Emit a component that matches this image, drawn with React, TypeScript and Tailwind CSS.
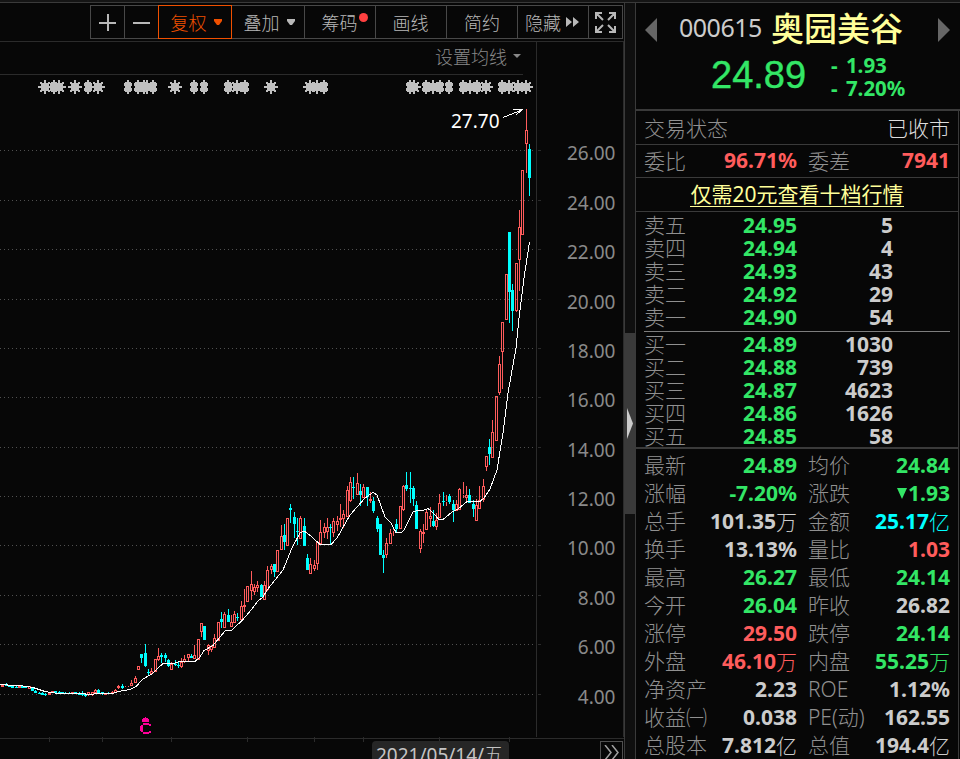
import React from 'react'

type Candle = [x: number, high: number, top: number, bottom: number, low: number, up: 0 | 1]

interface QuoteCell {
    label: string
    value: string
    unit?: string
    color: string
    arrow?: boolean
}

const GREEN = 'text-[#33e666]'
const RED = 'text-[#ff5c5c]'
const WHITE = 'text-[#cccccc]'
const CYAN = 'text-[#00ffff]'

const SANS = "font-['Noto_Sans','Noto_Sans_CJK_SC',sans-serif]"
const CJK = "font-['Noto_Sans_CJK_SC',sans-serif] font-light"

// x, high, body top, body bottom, low, rising
const candles: Candle[] = [
    [2, 684, 685, 686, 686, 1], [6, 683, 684, 685, 685, 0], [9, 685, 685, 686, 686, 0],
    [12, 685, 686, 687, 687, 0], [16, 686, 687, 687, 687, 0], [19, 685, 686, 687, 687, 1],
    [22, 686, 686, 687, 687, 0], [25, 686, 687, 687, 687, 0], [29, 686, 686, 688, 688, 1],
    [32, 687, 688, 690, 690, 0], [35, 690, 691, 692, 692, 0], [39, 692, 693, 693, 693, 0],
    [42, 692, 693, 694, 694, 0], [45, 693, 694, 694, 695, 0], [49, 692, 693, 694, 694, 1],
    [52, 691, 691, 692, 692, 1], [55, 691, 691, 692, 692, 0], [59, 691, 692, 693, 693, 0],
    [62, 692, 692, 693, 693, 0], [65, 692, 693, 693, 693, 0], [69, 692, 693, 693, 693, 0],
    [72, 692, 692, 693, 693, 1], [75, 692, 692, 693, 693, 0], [79, 692, 693, 694, 694, 0],
    [82, 691, 693, 694, 695, 0], [85, 694, 694, 695, 696, 0], [88, 692, 692, 694, 695, 1],
    [92, 692, 692, 694, 695, 1], [95, 689, 690, 692, 693, 1], [98, 689, 690, 692, 693, 0],
    [102, 692, 692, 693, 694, 0], [105, 693, 693, 694, 694, 1], [108, 692, 693, 693, 693, 0],
    [112, 691, 692, 693, 693, 1], [115, 689, 690, 692, 692, 1], [118, 685, 686, 687, 688, 1],
    [122, 684, 686, 687, 688, 0], [125, 686, 687, 687, 687, 1], [128, 686, 687, 687, 687, 1],
    [131, 680, 683, 685, 685, 1], [135, 676, 678, 682, 682, 1], [138, 666, 666, 669, 669, 1],
    [141, 654, 654, 657, 662, 0], [145, 644, 653, 665, 666, 0], [148, 669, 672, 672, 675, 0],
    [151, 668, 671, 673, 673, 1], [155, 659, 659, 671, 671, 1], [158, 648, 656, 659, 660, 1],
    [161, 653, 655, 656, 662, 0], [165, 653, 655, 657, 661, 0], [168, 659, 660, 665, 666, 0],
    [171, 662, 664, 669, 669, 1], [175, 660, 664, 664, 665, 0], [178, 661, 665, 665, 667, 0],
    [181, 658, 662, 666, 667, 1], [184, 655, 659, 661, 662, 1], [188, 654, 654, 657, 660, 1],
    [191, 654, 656, 657, 657, 0], [194, 645, 655, 658, 658, 1], [198, 639, 639, 659, 659, 1],
    [201, 623, 623, 631, 636, 1], [204, 626, 626, 639, 639, 0], [208, 644, 645, 650, 654, 1],
    [211, 645, 646, 649, 651, 1], [214, 634, 638, 647, 647, 1], [218, 622, 622, 640, 640, 1],
    [221, 612, 619, 621, 627, 0], [224, 612, 614, 627, 627, 1], [228, 609, 615, 621, 621, 0],
    [231, 615, 622, 626, 626, 1], [234, 611, 614, 622, 622, 1], [237, 613, 617, 617, 620, 0],
    [241, 601, 606, 619, 619, 1], [244, 589, 605, 606, 611, 1], [247, 586, 586, 601, 601, 1],
    [251, 571, 584, 590, 599, 1], [254, 584, 587, 591, 594, 1], [257, 581, 585, 587, 591, 1],
    [261, 584, 585, 596, 596, 0], [264, 581, 585, 599, 599, 1], [267, 566, 570, 589, 590, 1],
    [271, 564, 566, 569, 573, 1], [274, 564, 564, 571, 576, 0], [277, 550, 550, 571, 571, 1],
    [281, 525, 536, 549, 549, 1], [284, 524, 535, 541, 549, 0], [287, 518, 518, 545, 545, 1],
    [290, 504, 508, 509, 522, 0], [294, 512, 517, 523, 537, 0], [297, 518, 531, 531, 544, 0],
    [300, 516, 518, 538, 538, 1], [304, 518, 526, 545, 545, 0], [307, 554, 558, 569, 569, 0],
    [310, 558, 564, 573, 573, 1], [314, 560, 565, 568, 570, 1], [317, 541, 542, 563, 569, 1],
    [320, 520, 532, 543, 543, 1], [324, 523, 527, 532, 537, 1], [327, 518, 527, 531, 538, 1],
    [330, 524, 527, 527, 544, 0], [333, 518, 521, 532, 536, 1], [337, 516, 521, 524, 530, 1],
    [340, 504, 518, 519, 526, 1], [343, 510, 514, 518, 527, 1], [347, 486, 490, 516, 516, 1],
    [350, 477, 482, 500, 501, 1], [353, 477, 487, 487, 498, 0], [357, 473, 483, 494, 494, 1],
    [360, 484, 491, 494, 505, 0], [363, 484, 487, 497, 497, 1], [367, 487, 487, 496, 505, 0],
    [370, 492, 499, 500, 502, 1], [373, 497, 501, 510, 512, 0], [377, 516, 518, 528, 531, 0],
    [380, 524, 524, 554, 554, 0], [383, 550, 555, 557, 572, 0], [386, 538, 543, 554, 557, 1],
    [390, 529, 533, 543, 543, 1], [393, 529, 530, 530, 535, 1], [396, 519, 524, 528, 532, 0],
    [400, 506, 506, 528, 528, 1], [403, 485, 486, 509, 510, 1], [406, 472, 485, 488, 490, 0],
    [410, 472, 488, 488, 502, 0], [413, 486, 488, 498, 505, 0], [416, 501, 505, 528, 528, 0],
    [420, 529, 531, 548, 552, 1], [423, 524, 532, 533, 542, 1], [426, 510, 512, 529, 529, 1],
    [430, 507, 516, 518, 526, 1], [433, 510, 521, 525, 526, 0], [436, 513, 520, 526, 529, 1],
    [439, 494, 503, 517, 517, 1], [443, 492, 501, 501, 505, 0], [446, 495, 501, 501, 505, 1],
    [449, 494, 496, 501, 503, 0], [453, 500, 504, 509, 521, 0], [456, 500, 504, 510, 510, 1],
    [459, 488, 489, 509, 509, 1], [463, 482, 494, 494, 497, 1], [466, 486, 495, 497, 502, 1],
    [469, 489, 495, 502, 502, 0], [473, 500, 504, 508, 516, 0], [476, 499, 505, 520, 520, 1],
    [479, 486, 500, 508, 508, 1], [483, 479, 486, 499, 501, 1], [486, 456, 456, 466, 470, 1],
    [489, 439, 447, 453, 464, 0], [492, 420, 432, 457, 457, 1], [496, 396, 396, 440, 440, 1],
    [499, 356, 364, 392, 394, 1], [502, 322, 322, 351, 388, 1], [506, 274, 274, 319, 319, 1],
    [509, 232, 232, 291, 322, 0], [512, 284, 290, 310, 330, 0], [516, 263, 263, 310, 311, 1],
    [519, 210, 227, 259, 290, 1], [522, 170, 170, 234, 234, 1], [526, 109, 130, 143, 172, 1],
    [529, 144, 149, 177, 195, 0],
]

const average =
    '0,684.5 7,684.5 8,685.5 20,685.5 33,687.5 45,691.5 58,693.5 83,693.5 88,694.5 100,693.5 113,693.5 118,691.5 130,689.5 136,686.5 143,679 152,674 157,669 163,663.5 173,663.5 180,661.5 195,661.5 200,657 204,650.5 213,645.5 225,631 232,630 242,620.5 252,609 258,601 263,597 267,590 283,570 292,548 300,533 303,531.5 305,531.5 312,537 320,544.5 331,544.5 337,538 350,515 365,498 373,492.5 377,495 385,517 391,523 396,532.5 401,533 404,530 413,512 417,510.5 423,510.5 428,508.5 432,512 439,519.5 443,519.5 452,512 458,509 467,501.5 480,501.5 484,498 490,489 497,470 503,433 508,393 516,348 519,318 524,278 529.5,242'

const prices = [
    ['26.00', 150], ['24.00', 200], ['22.00', 249], ['20.00', 299], ['18.00', 348], ['16.00', 397],
    ['14.00', 447], ['12.00', 496], ['10.00', 545], ['8.00', 595], ['6.00', 644], ['4.00', 694],
] as const

const timeTicks = [49, 102, 171, 247, 314, 363, 439, 509]

// event markers above the chart: full stars and the narrow ones that are cut at the sides
const wideMarks = [45, 59, 75, 98, 147, 175, 237, 271, 310, 317, 414, 433, 470, 486, 509, 518, 526]
const narrowMarks = [54, 88, 128, 138, 144, 153, 194, 204, 228, 245, 324, 410, 426, 440, 449, 463, 477, 502]

const asks = [
    ['卖五', '24.95', '5'],
    ['卖四', '24.94', '4'],
    ['卖三', '24.93', '43'],
    ['卖二', '24.92', '29'],
    ['卖一', '24.90', '54'],
]

const bids = [
    ['买一', '24.89', '1030'],
    ['买二', '24.88', '739'],
    ['买三', '24.87', '4623'],
    ['买四', '24.86', '1626'],
    ['买五', '24.85', '58'],
]

const quotes: [QuoteCell, QuoteCell][] = [
    [{ label: '最新', value: '24.89', color: GREEN }, { label: '均价', value: '24.84', color: GREEN }],
    [{ label: '涨幅', value: '-7.20%', color: GREEN }, { label: '涨跌', value: '1.93', color: GREEN, arrow: true }],
    [{ label: '总手', value: '101.35', unit: '万', color: WHITE }, { label: '金额', value: '25.17', unit: '亿', color: CYAN }],
    [{ label: '换手', value: '13.13%', color: WHITE }, { label: '量比', value: '1.03', color: RED }],
    [{ label: '最高', value: '26.27', color: GREEN }, { label: '最低', value: '24.14', color: GREEN }],
    [{ label: '今开', value: '26.04', color: GREEN }, { label: '昨收', value: '26.82', color: WHITE }],
    [{ label: '涨停', value: '29.50', color: RED }, { label: '跌停', value: '24.14', color: GREEN }],
    [{ label: '外盘', value: '46.10', unit: '万', color: RED }, { label: '内盘', value: '55.25', unit: '万', color: GREEN }],
    [{ label: '净资产', value: '2.23', color: WHITE }, { label: 'ROE', value: '1.12%', color: WHITE }],
    [{ label: '收益㈠', value: '0.038', color: WHITE }, { label: 'PE(动)', value: '162.55', color: WHITE }],
    [{ label: '总股本', value: '7.812', unit: '亿', color: WHITE }, { label: '总值', value: '194.4', unit: '亿', color: WHITE }],
]

const Caret = () => (
    <svg width="8" height="6" viewBox="0 0 8 6" fill="currentColor">
        <path d="M0 0h8v2L5 6H3L0 2z" />
    </svg>
)

const ToolButton: React.FC<{ className: string; children: React.ReactNode }> = ({ className, children }) => (
    <button className={`-ml-px flex h-[34px] items-center justify-center border text-[18px] leading-none ${CJK} ${className}`}>
        {children}
    </button>
)

const Toolbar = () => (
    <div className="flex h-[39px] shrink-0 items-start border-b border-[#2b2b2b] pt-[2px] pl-[91px] text-[#b8b8b8]">
        <ToolButton className="w-[35px] border-[#484848] pr-px">
            <svg width="17" height="17" viewBox="0 0 17 17" fill="currentColor" shapeRendering="crispEdges">
                <path d="M0 8h17v2H0zM8 0h2v17H8z" />
            </svg>
        </ToolButton>
        <ToolButton className="w-[35px] border-[#484848] pr-px">
            <svg width="17" height="17" viewBox="0 0 17 17" fill="currentColor" shapeRendering="crispEdges">
                <path d="M0 8h17v2H0z" />
            </svg>
        </ToolButton>
        <ToolButton className="z-10 w-[74px] gap-[7px] border-[#f05000] pb-px pl-[2px] text-[#f05000]">
            复权 <Caret />
        </ToolButton>
        <ToolButton className="w-[74px] gap-[7px] border-[#484848] pb-px pl-[2px]">
            叠加 <Caret />
        </ToolButton>
        <ToolButton className="relative w-[72px] border-[#484848] pr-px pb-px">
            筹码
            <i className="absolute top-[7px] right-[7px] size-[9px] rounded-full bg-[#ff4040]" />
        </ToolButton>
        <ToolButton className="w-[72px] border-[#484848] pr-px pb-px">画线</ToolButton>
        <ToolButton className="w-[72px] border-[#484848] pb-px">简约</ToolButton>
        <ToolButton className="w-[72px] gap-[5px] border-[#484848] pr-[2px] pb-px">
            隐藏
            <svg width="13" height="10" viewBox="0 0 13 10" fill="currentColor">
                <path d="M0 0l6 5-6 5zM7 0l6 5-6 5z" />
            </svg>
        </ToolButton>
        <ToolButton className="w-[35px] border-[#484848] pr-px">
            <svg width="21" height="21" viewBox="0 0 21 21" fill="none" stroke="currentColor" strokeWidth="2">
                <path d="M1 7V1h6M14 1h6v6M20 14v6h-6M7 20H1v-6M1 1l7 7M20 1l-7 7M20 20l-7-7M1 20l7-7" />
            </svg>
        </ToolButton>
    </div>
)

const Chart = () => (
    <svg width="624" height="697" viewBox="0 42 624 697" className="block" shapeRendering="crispEdges">
        <path d="M0 74.5h523M0 738.5h624" stroke="#2b2b2b" />
        <path d="M536.5 42v695M623.5 42v695" stroke="#2b2b2b" />
        {prices.map(([label, y]) => (
            <g key={label}>
                <path d={`M0 ${y + 0.5}h534`} stroke="#505050" strokeDasharray="1 3" />
                <path d={`M538 ${y + 0.5}h3`} stroke="#2b2b2b" />
                <text x="615.500" y={y + 10} textAnchor="end" fontSize="19" fill="#8a8a8a" className={SANS}>
                    {label}
                </text>
            </g>
        ))}
        {narrowMarks.map((x) => (
            <path
                key={x}
                transform={`translate(${x} 87)`}
                fill="#c0c0c0"
                d="M-1-7h2v2h2v1h1v3h-1v2h1v3h-1v1h-2v2h-2v-2h-2v-1h-1v-3h1v-2h-1v-3h1v-1h2z"
            />
        ))}
        {wideMarks.map((x) => (
            <path
                key={x}
                transform={`translate(${x} 87)`}
                fill="#c0c0c0"
                d="M-1-7h2v14h-2zM-7-1h14v2h-14zM-3-4h6v1h1v6h-1v1h-6v-1h-1v-6h1zM-5-5h2v2h-2zM3-5h2v2h-2zM-5 3h2v2h-2zM3 3h2v2h-2z"
            />
        ))}
        {candles.map(([x, high, top, bottom, low, up]) =>
            up ? (
                <g key={x} fill="none" stroke="#ff5c5c">
                    {high < top && <path d={`M${x + 0.5} ${high}V${top}`} />}
                    {low > bottom && <path d={`M${x + 0.5} ${bottom + 1}V${low + 1}`} />}
                    <rect x={x - 0.5} y={top + 0.5} width="2" height={bottom - top} />
                </g>
            ) : (
                <g key={x} fill="#00ffff">
                    <rect x={x} y={high} width="1" height={low - high + 1} />
                    <rect x={x - 1} y={top} width="3" height={bottom - top + 1} />
                </g>
            ),
        )}
        <polyline points={average} fill="none" stroke="#ffffff" />
        <text x="451" y="128" fontSize="19" fill="#ffffff" className={SANS}>
            27.70
        </text>
        <path d="M503 117.5L523 109.5M513 109.5h10M516 114.5l7-5" stroke="#ffffff" fill="none" />
        <path
            d="M145 717h1v1h2v1h1v3h-7v-3h1v-1h2zM143 723h6v2h-6zM149 724h2v2h-2zM141 725h2v1h-2zM140 726h3v5h-3zM141 731h2v1h-2zM143 732h6v2h-6zM149 731h2v2h-2z"
            fill="#ff0099"
        />
    </svg>
)

const TimeAxis = () => (
    <div className="relative flex h-[20px] shrink-0 items-start">
        <svg width="624" height="5" className="absolute -top-[2px] left-0" shapeRendering="crispEdges">
            {timeTicks.map((x) => (
                <path key={x} d={`M${x + 0.5} 0v5`} stroke="#2b2b2b" />
            ))}
        </svg>
        <div className={`z-10 mt-[2px] ml-[372px] h-[30px] w-[137px] rounded-sm bg-[#262626] pl-[4px] text-[19px] leading-[26px] whitespace-nowrap text-[#c4c4c4] ${SANS}`}>
            2021/05/14/<span className={CJK}>五</span>
        </div>
        <div className="mt-[2px] ml-[91px] flex h-[22px] w-[23px] items-start justify-center border border-[#505050] pt-[3px]">
            <svg width="15" height="15" viewBox="0 0 15 15" fill="none" stroke="#a0a0a0" strokeWidth="1.5">
                <path d="M1 0l6 7.500-6 7.500M8 0l6 7.500-6 7.500" />
            </svg>
        </div>
    </div>
)

const BookRow: React.FC<{ row: string[] }> = ({ row: [label, price, volume] }) => (
    <div className="flex h-[23px] items-center text-[21px] leading-[23px]">
        <span className={`w-[70px] pb-[2px] text-[#909090] ${CJK}`}>{label}</span>
        <span className={`w-[83px] text-right font-bold ${GREEN}`}>{price}</span>
        <span className={`w-[96px] text-right font-bold ${WHITE}`}>{volume}</span>
    </div>
)

const Cell: React.FC<{ cell: QuoteCell; className: string }> = ({ cell, className }) => (
    <div className={`flex items-center justify-between whitespace-nowrap ${className}`}>
        <span className="font-['Noto_Sans','Noto_Sans_CJK_SC',sans-serif] font-light text-[#909090]">{cell.label}</span>
        <span className={`flex items-center font-bold ${cell.color}`}>
            {cell.arrow && (
                <svg width="10" height="11" viewBox="0 0 10 11" fill="currentColor" className="mr-px">
                    <path d="M0 0h10L5 11z" />
                </svg>
            )}
            {cell.value}
            {cell.unit && <span className={CJK}>{cell.unit}</span>}
        </span>
    </div>
)

const QuotePanel = () => (
    <aside className={`flex w-[325px] shrink-0 flex-col border-l border-[#3a3a3a] ${SANS}`}>
        <header className="flex h-[108px] shrink-0 flex-col border-b-2 border-[#3a3a3a]">
            <div className="flex h-[49px] items-start pl-[9px]">
                <svg width="12" height="24" viewBox="0 0 12 24" fill="#666666" className="mt-[15px]">
                    <path d="M12 0v24L0 12z" />
                </svg>
                <span className={`mt-[4px] ml-[22px] w-[92px] text-[25px] leading-[40px] tracking-[-0.5px] ${WHITE}`}>000615</span>
                <span className="mt-[4px] w-[134px] font-['Noto_Sans_CJK_SC',sans-serif] text-[33px] leading-[40px] font-medium text-[#ffff99]">
                    奥园美谷
                </span>
                <svg width="12" height="24" viewBox="0 0 12 24" fill="#666666" className="mt-[15px] ml-[33px]">
                    <path d="M0 0v24l12-12z" />
                </svg>
            </div>
            <div className={`flex items-start pl-[75px] ${GREEN}`}>
                <span className="w-[120px] font-['Liberation_Sans',sans-serif] text-[38px] leading-[46px] [-webkit-text-stroke:0.4px_currentColor]">
                    24.89
                </span>
                <span className="mt-[2px] flex flex-col text-[20.500px] leading-[23px] font-bold [word-spacing:3px]">
                    <span>- 1.93</span>
                    <span>- 7.20%</span>
                </span>
            </div>
        </header>
        <div className="flex w-[323px] flex-1 flex-col border-r border-[#3a3a3a]">
            <div className={`flex h-[34px] shrink-0 items-center justify-between border-b border-[#3a3a3a] px-[8px] text-[21px] ${CJK}`}>
                <span className="text-[#909090]">交易状态</span>
                <span className="text-[#dddddd]">已收市</span>
            </div>
            <div className="flex h-[33px] shrink-0 items-center border-b border-[#3a3a3a] pl-[8px] text-[21px]">
                <span className={`w-[70px] text-[#909090] ${CJK}`}>委比</span>
                <span className={`w-[83px] text-right font-bold ${RED}`}>96.71%</span>
                <span className={`ml-[11px] w-[70px] text-[#909090] ${CJK}`}>委差</span>
                <span className={`w-[72px] text-right font-bold ${RED}`}>7941</span>
            </div>
            <a className="flex h-[34px] shrink-0 items-center justify-center border-b border-[#3a3a3a] text-[21px] text-[#ffff99]">
                <span className="border-b border-[#ffff99] leading-[23px]">仅需20元查看十档行情</span>
            </a>
            <div className="h-[237px] shrink-0 border-b-2 border-[#3a3a3a] pt-[2px] pl-[8px]">
                {asks.map((row) => (
                    <BookRow key={row[0]} row={row} />
                ))}
                <div className="mt-[2px] mr-[8px] mb-px h-px bg-[#7d7d7d]" />
                {bids.map((row) => (
                    <BookRow key={row[0]} row={row} />
                ))}
            </div>
            <div className="shrink-0 pt-[2px] pl-[8px] text-[21px] leading-[28px]">
                {quotes.map(([left, right]) => (
                    <div key={left.label} className="flex h-[28px]">
                        <Cell cell={left} className="w-[153px]" />
                        <Cell cell={right} className="ml-[11px] w-[142px]" />
                    </div>
                ))}
            </div>
        </div>
    </aside>
)

export default function App() {
    return (
        <div className="flex h-[759px] w-[960px] flex-col overflow-hidden bg-[#070707]">
            <div className="h-[3px] shrink-0 border-b border-[#3a3a3a] bg-[#151515]" />
            <div className="flex min-h-0 flex-1">
                <main className="flex w-[624px] shrink-0 flex-col">
                    <Toolbar />
                    <div className="relative shrink-0">
                        <Chart />
                        <div className={`absolute top-[2px] left-[435px] flex items-center gap-[6px] text-[18px] leading-[24px] text-[#888888] ${CJK}`}>
                            设置均线
                            <svg width="8" height="4" viewBox="0 0 8 4" fill="currentColor">
                                <path d="M0 0h8L4 4z" />
                            </svg>
                        </div>
                    </div>
                    <TimeAxis />
                </main>
                <div className="flex w-[11px] shrink-0 flex-col border-l border-[#3a3a3a] bg-[#0f0f0f] pt-[330px]">
                    <div className="flex h-[181px] items-center bg-[#3a3a3a] pl-[2px]">
                        <svg width="6" height="31" viewBox="0 0 6 31" fill="#cccccc">
                            <path d="M0 0l6 15.500-6 15.500z" />
                        </svg>
                    </div>
                </div>
                <QuotePanel />
            </div>
        </div>
    )
}
